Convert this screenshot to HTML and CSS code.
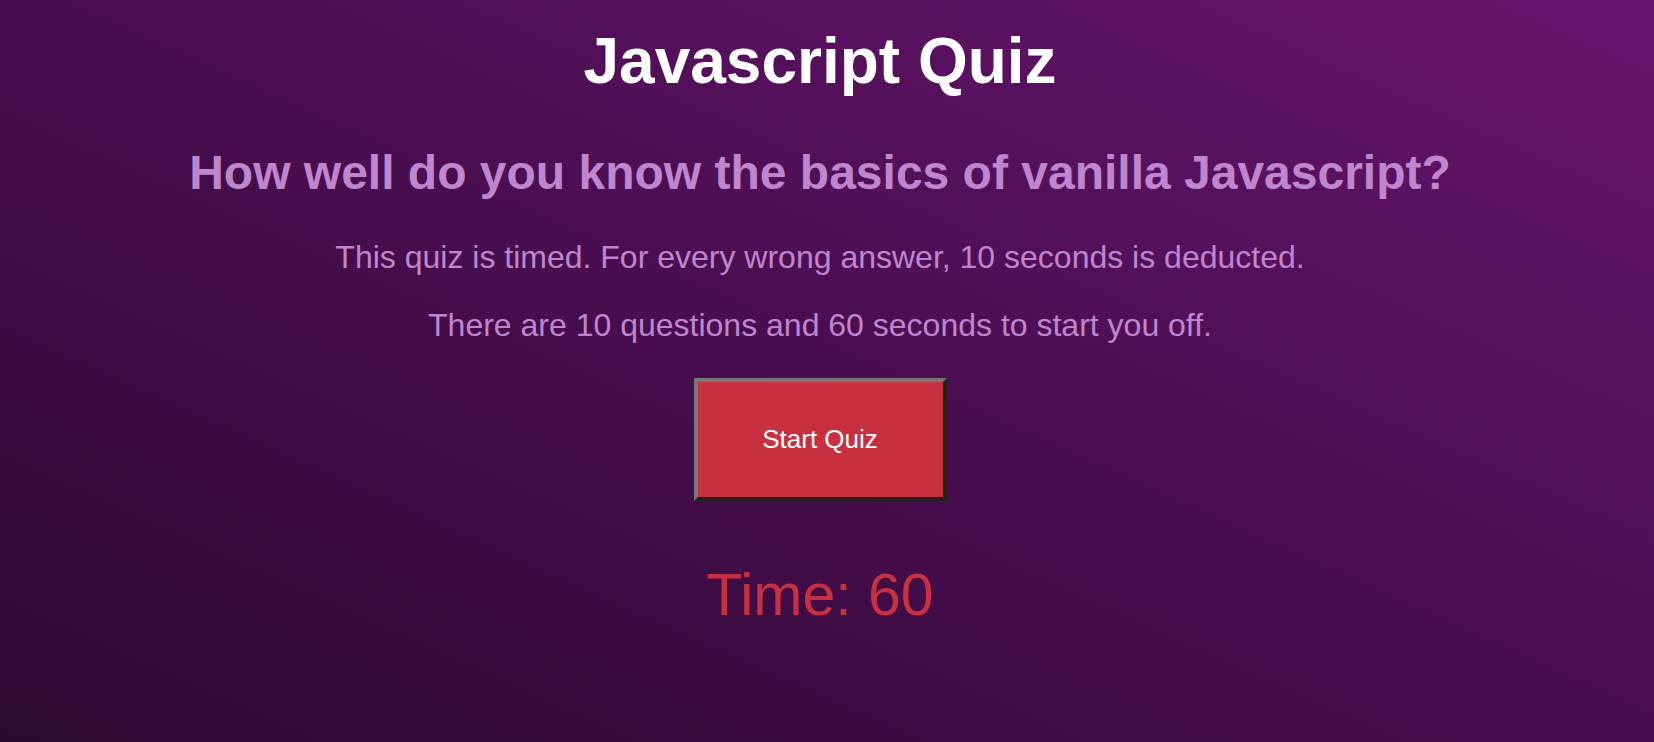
FILE: index.html
```html
<!DOCTYPE html>
<html lang="en">
<head>
<meta charset="utf-8">
<title>Javascript Quiz</title>
<link rel="stylesheet" href="styles.css">
</head>
<body>
<main class="quiz">
  <h1 class="quiz-title">Javascript Quiz</h1>
  <h2 class="quiz-subtitle">How well do you know the basics of vanilla Javascript?</h2>
  <p class="quiz-info quiz-info-first">This quiz is timed. For every wrong answer, 10 seconds is deducted.</p>
  <p class="quiz-info quiz-info-second">There are 10 questions and 60 seconds to start you off.</p>
  <button class="start-btn" type="button">Start Quiz</button>
  <div class="timer">Time: 60</div>
</main>
</body>
</html>
```
FILE: styles.css
```css
html, body {
  margin: 0;
  padding: 0;
}
body {
  min-height: 100vh;
  background: linear-gradient(to top right, #2b0930, #67136e);
  font-family: "Liberation Sans", Arial, sans-serif;
  color: #fff;
}
.quiz {
  display: flex;
  flex-direction: column;
  align-items: center;
  text-align: center;
  padding: 24px 14px 0 0;
}
.quiz-title {
  margin: 0;
  font-size: 64px;
  font-weight: bold;
  color: #fff;
}
.quiz-subtitle {
  margin: 47px 0 0;
  font-size: 48px;
  font-weight: bold;
  color: #bf86cf;
}
.quiz-info {
  margin: 0;
  font-size: 32px;
  color: #bf86cf;
}
.quiz-info-first {
  margin-top: 39px;
}
.quiz-info-second {
  margin-top: 31px;
}
.start-btn {
  margin-top: 34px;
  width: 253px;
  height: 123px;
  box-sizing: border-box;
  background: #c9303f;
  color: #fff;
  font-family: "Liberation Sans", Arial, sans-serif;
  font-size: 26px;
  border-style: solid;
  border-width: 4px;
  border-color: #777 #222 #222 #777;
  padding: 0;
}
.timer {
  margin-top: 60px;
  font-size: 59px;
  color: #c9303f;
}
```
